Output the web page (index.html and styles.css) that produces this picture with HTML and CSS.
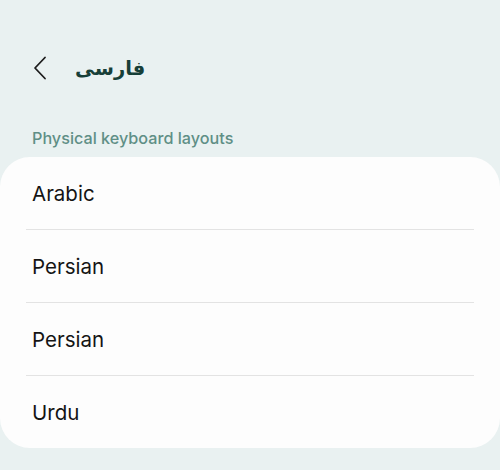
FILE: index.html
```html
<!DOCTYPE html>
<html>
<head>
<meta charset="utf-8">
<link rel="stylesheet" href="styles.css">
</head>
<body>
<div class="screen">
  <header class="topbar">
    <span class="back">
      <svg width="14" height="24" viewBox="0 0 14 24"><path d="M12 1.5 L2 12 L12 22.5" fill="none" stroke="#1c1c1c" stroke-width="1.8" stroke-linecap="round" stroke-linejoin="round"/></svg>
    </span>
    <h1 class="title" dir="rtl">فارسی</h1>
  </header>
  <div class="section">Physical keyboard layouts</div>
  <div class="card">
    <div class="row">Arabic</div>
    <div class="row">Persian</div>
    <div class="row">Persian</div>
    <div class="row">Urdu</div>
  </div>
</div>
</body>
</html>
```
FILE: styles.css
```css
html, body {
  margin: 0;
  padding: 0;
  background: #e9f1f1;
}
.screen {
  width: 500px;
  height: 470px;
  overflow: hidden;
  font-family: Inter, Roboto, "Noto Sans", sans-serif;
}
.topbar {
  display: flex;
  align-items: center;
  height: 40px;
  padding: 48px 0 0 33px;
}
.back {
  display: flex;
  width: 14px;
  height: 24px;
}
.title {
  margin: 0 0 0 28px;
  font-family: "DejaVu Sans", "Noto Sans", sans-serif;
  font-size: 19.5px;
  font-weight: bold;
  color: #173f38;
}
.section {
  padding: 40px 0 0 32px;
  font-size: 16.2px;
  font-weight: 500;
  color: #5f8f86;
  height: 29px;
}
.card {
  background: #fdfdfd;
  border-radius: 30px;
  display: flex;
  flex-direction: column;
  padding: 0 26px;
}
.row {
  height: 72px;
  display: flex;
  align-items: center;
  padding-left: 6px;
  font-size: 20.5px;
  color: #141414;
  border-top: 1px solid #e3e3e3;
}
.row:first-child {
  border-top: none;
}
```
